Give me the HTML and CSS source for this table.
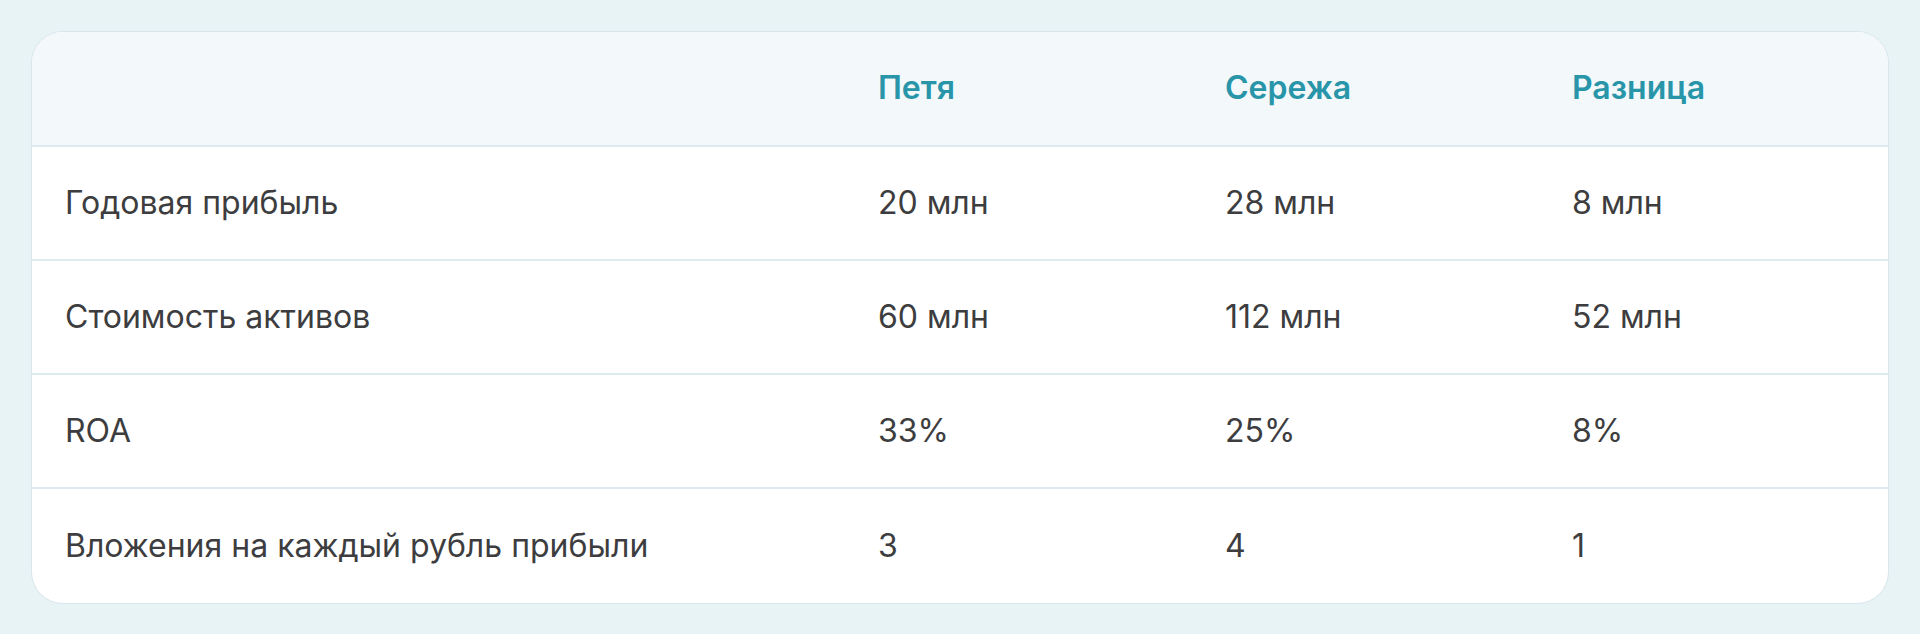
FILE: index.html
```html
<!DOCTYPE html>
<html lang="ru">
<head>
<meta charset="utf-8">
<link rel="stylesheet" href="styles.css">
</head>
<body>
<div class="card">
  <div class="row head">
    <div class="cell"></div>
    <div class="cell">Петя</div>
    <div class="cell">Сережа</div>
    <div class="cell">Разница</div>
  </div>
  <div class="row">
    <div class="cell">Годовая прибыль</div>
    <div class="cell">20 млн</div>
    <div class="cell">28 млн</div>
    <div class="cell">8 млн</div>
  </div>
  <div class="row">
    <div class="cell">Стоимость активов</div>
    <div class="cell">60 млн</div>
    <div class="cell">112 млн</div>
    <div class="cell">52 млн</div>
  </div>
  <div class="row">
    <div class="cell">ROA</div>
    <div class="cell">33%</div>
    <div class="cell">25%</div>
    <div class="cell">8%</div>
  </div>
  <div class="row last">
    <div class="cell">Вложения на каждый рубль прибыли</div>
    <div class="cell">3</div>
    <div class="cell">4</div>
    <div class="cell">1</div>
  </div>
</div>
</body>
</html>
```
FILE: styles.css
```css
html, body {
  margin: 0;
  padding: 0;
}
body {
  background: #e8f3f5;
  padding: 31px;
  font-family: Inter, "Noto Sans", sans-serif;
  color: #3d3d40;
}
.card {
  background: #ffffff;
  border: 1px solid #d7e7eb;
  border-radius: 32px;
  overflow: hidden;
}
.row {
  display: grid;
  grid-template-columns: 813px 347px 347px 1fr;
  padding: 0 33px;
  height: 112px;
  align-items: center;
  border-bottom: 2px solid #dcebef;
  font-size: 32px;
  line-height: 1.2;
}
.row.head {
  height: 113px;
  background: #f3f8fb;
  color: #2895a9;
  font-weight: 600;
}
.row.last {
  height: 114px;
  border-bottom: none;
}
```
